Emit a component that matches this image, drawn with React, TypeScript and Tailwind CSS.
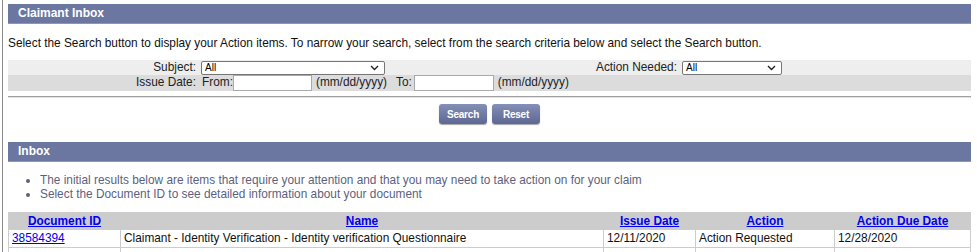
import React from 'react';

const font = { fontFamily: '"Liberation Sans", Arial, sans-serif' };

const Bar = ({ title }: { title: string }) => (
  <div className="h-[20px] bg-[#6b77a1] border-b border-[#8d96ba] text-white font-bold text-[12px] leading-[19px] pl-[10px]">
    {title}
  </div>
);

const Select = ({ width }: { width: string }) => (
  <div className={`relative h-[14px] ${width}`}>
    <div className="w-full h-full border border-[#767676] rounded-[2px] bg-white text-[10px] leading-[12px] pl-[3px] text-black">
      All
    </div>
    <svg className="absolute right-[6px] top-[4px] pointer-events-none" width="9" height="6" viewBox="0 0 9 6">
      <path d="M1 1 L4.5 4.5 L8 1" fill="none" stroke="#222" strokeWidth="1.4" />
    </svg>
  </div>
);

const Btn = ({ label }: { label: string }) => (
  <button className="w-[48px] h-[20px] rounded-[3px] bg-gradient-to-b from-[#8590b7] to-[#5c6794] text-white font-bold text-[10px] tracking-[-0.2px] shadow-[0_1px_1px_rgba(0,0,0,0.35)]">
    {label}
  </button>
);

export default function App() {
  return (
    <div style={font} className="h-[252px] overflow-hidden w-[977px] bg-white text-[11.85px] text-[#111]">
      <div className="ml-[2px] min-h-[252px] border-l border-[#8a8a8a] pl-[5px] pr-[6px] pt-[4px]">
        <Bar title="Claimant Inbox" />

        <p className="mt-[12px] leading-[14px] text-[#111]">
          Select the Search button to display your Action items. To narrow your search, select from the search criteria below and select the Search button.
        </p>

        <div className="mt-[10px] text-[#222]">
          <div className="flex items-center h-[15px] bg-[#eeeeee]">
            <div className="w-[188px] text-right">Subject:</div>
            <div className="ml-[5px]">
              <Select width="w-[184px]" />
            </div>
            <div className="flex-1" />
            <div className="text-right">Action Needed:</div>
            <div className="ml-[5px]">
              <Select width="w-[100px]" />
            </div>
            <div className="w-[189px]" />
          </div>
          <div className="flex items-center h-[16px] bg-[#dcdcdc]">
            <div className="w-[188px] text-right">Issue Date:</div>
            <span className="ml-[6px]">From:</span>
            <input className="w-[79px] h-[16px] bg-white border border-[#a9a9a9] outline-none" />
            <span className="ml-[4px]">(mm/dd/yyyy)</span>
            <span className="ml-[9px]">To:</span>
            <input className="ml-[2px] w-[80px] h-[16px] bg-white border border-[#a9a9a9] outline-none" />
            <span className="ml-[4px]">(mm/dd/yyyy)</span>
          </div>
        </div>

        <div className="mt-[5px] border-t border-[#a0a0a0] border-b border-b-[#e4e4e4]" />

        <div className="mt-[6px] flex justify-center gap-[5px]">
          <Btn label="Search" />
          <Btn label="Reset" />
        </div>

        <div className="mt-[18px]">
          <Bar title="Inbox" />
        </div>

        <ul className="mt-[11px] list-disc pl-[32px] leading-[14px] text-[#5d5f80]">
          <li>The initial results below are items that require your attention and that you may need to take action on for your claim</li>
          <li>Select the Document ID to see detailed information about your document</li>
        </ul>

        <table className="mt-[11px] w-full border-separate border-spacing-[1px] bg-[#cccccc] table-fixed">
          <colgroup>
            <col className="w-[111px]" />
            <col className="w-[482px]" />
            <col className="w-[91px]" />
            <col className="w-[138px]" />
            <col />
          </colgroup>
          <thead>
            <tr className="h-[16px]">
              {['Document ID', 'Name', 'Issue Date', 'Action', 'Action Due Date'].map((h) => (
                <th key={h} className="bg-[#cccccc] p-0 font-bold text-center leading-[16px]">
                  <a href="#" className="text-[#0000ee] underline">{h}</a>
                </th>
              ))}
            </tr>
          </thead>
          <tbody>
            <tr className="h-[17px]">
              <td className="bg-white px-[3px] leading-[17px]">
                <a href="#" className="text-[#0000ee] underline">38584394</a>
              </td>
              <td className="bg-white px-[3px] leading-[17px]">Claimant - Identity Verification - Identity verification Questionnaire</td>
              <td className="bg-white px-[3px] leading-[17px]">12/11/2020</td>
              <td className="bg-white px-[3px] leading-[17px]">Action Requested</td>
              <td className="bg-white px-[3px] leading-[17px]">12/28/2020</td>
            </tr>
            <tr className="h-[17px]">
              <td className="bg-white" />
              <td className="bg-white" />
              <td className="bg-white" />
              <td className="bg-white" />
              <td className="bg-white" />
            </tr>
          </tbody>
        </table>
      </div>
    </div>
  );
}
